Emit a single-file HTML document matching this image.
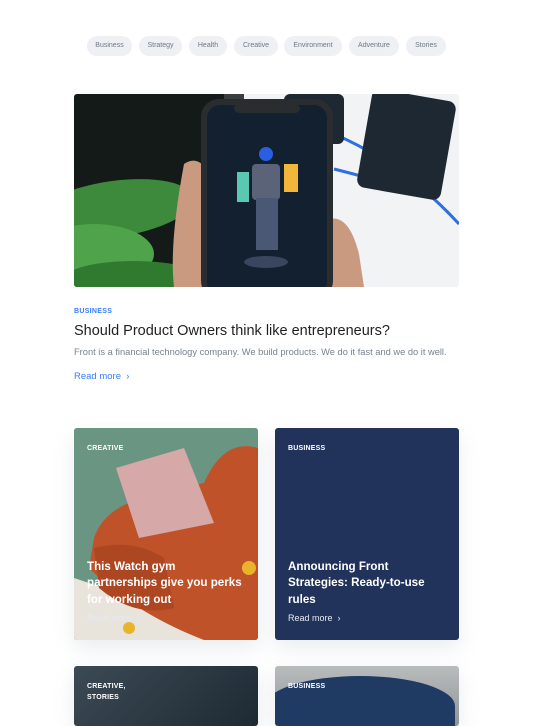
<!DOCTYPE html>
<html><head><meta charset="utf-8"><style>
*{margin:0;padding:0;box-sizing:border-box}
body{width:533px;height:711px;overflow:hidden;background:#fff;font-family:"Liberation Sans",sans-serif;position:relative}
.pill{position:absolute;top:36px;height:20px;border-radius:10px;background:#eef0f3;color:#6f7784;font-size:7px;line-height:20px;text-align:center}
.abs{position:absolute}
.card{position:absolute;width:184px;border-radius:3px;overflow:hidden;box-shadow:0 8px 20px rgba(140,152,164,.18)}
.cat{position:absolute;left:13px;top:15px;color:#fff;font-size:7px;font-weight:bold;letter-spacing:.2px;line-height:11px}
.ct{position:absolute;left:13px;top:131px;width:160px;color:#fff;font-size:11.6px;font-weight:bold;line-height:16.3px}
.rm{position:absolute;left:13px;top:185px;color:#e6e9f0;font-size:9px}
</style></head><body>
<div class="pill" style="left:87px;width:45px">Business</div>
<div class="pill" style="left:139px;width:43px">Strategy</div>
<div class="pill" style="left:189px;width:38px">Health</div>
<div class="pill" style="left:234px;width:44px">Creative</div>
<div class="pill" style="left:284px;width:58px">Environment</div>
<div class="pill" style="left:349px;width:50px">Adventure</div>
<div class="pill" style="left:406px;width:40px">Stories</div>

<svg class="abs" style="left:74px;top:94px;border-radius:3px" width="385" height="193" viewBox="0 0 385 193">
<rect width="385" height="193" fill="#f2f3f5"/>
<rect width="160" height="193" fill="#131a17"/>
<rect x="150" width="20" height="193" fill="#3a3e40"/>
<ellipse cx="40" cy="115" rx="80" ry="28" fill="#3d8a3c" transform="rotate(-8 40 115)"/>
<ellipse cx="20" cy="160" rx="60" ry="30" fill="#4fa34a"/>
<ellipse cx="60" cy="185" rx="70" ry="18" fill="#2f7a2f"/>
<path d="M260 40 Q330 70 385 130" stroke="#2f6fe0" stroke-width="3" fill="none"/>
<path d="M260 75 Q320 90 340 100" stroke="#2f6fe0" stroke-width="3" fill="none"/>
<rect x="290" y="0" width="85" height="100" rx="8" fill="#1d2833" transform="rotate(10 330 50)"/>
<rect x="210" y="0" width="60" height="50" rx="6" fill="#1d2833"/>
<path d="M110 70 Q125 60 135 80 L140 193 L100 193 Q95 150 110 70Z" fill="#c99a80"/>
<path d="M255 125 Q275 120 285 160 L290 193 L250 193Z" fill="#c99a80"/>
<rect x="127" y="5" width="132" height="200" rx="18" fill="#2a2d30"/>
<rect x="133" y="11" width="120" height="190" rx="13" fill="#132030"/>
<rect x="160" y="10" width="66" height="9" rx="5" fill="#2a2d30"/>
<circle cx="192" cy="60" r="7" fill="#2a5fe0"/>
<rect x="178" y="70" width="28" height="36" rx="4" fill="#5a6378"/>
<rect x="163" y="78" width="12" height="30" fill="#5bc9b1"/>
<rect x="210" y="70" width="14" height="28" fill="#f2b63a"/>
<rect x="182" y="104" width="22" height="52" fill="#4a5876"/>
<ellipse cx="192" cy="168" rx="22" ry="6" fill="#3a4660"/>
</svg>

<div class="abs" style="left:74px;top:308px;color:#377dff;font-size:7px;font-weight:bold;letter-spacing:.3px">BUSINESS</div>
<div class="abs" style="left:74px;top:323px;color:#1e2022;font-size:14.5px;white-space:nowrap">Should Product Owners think like entrepreneurs?</div>
<div class="abs" style="left:74px;top:347px;color:#77838f;font-size:9.3px;white-space:nowrap">Front is a financial technology company. We build products. We do it fast and we do it well.</div>
<div class="abs" style="left:74px;top:371px;color:#377dff;font-size:9.5px">Read more &nbsp;›</div>

<div class="card" style="left:74px;top:428px;height:212px;background:#6e9a86">
<svg class="abs" style="left:0;top:0" width="184" height="212">
<rect width="184" height="212" fill="#6b9583"/>
<path d="M0 150 L60 170 L140 212 L0 212Z" fill="#e8e4dc"/>
<path d="M20 110 Q30 80 70 70 L130 55 Q150 10 184 20 L184 212 L130 212 Q60 185 15 140Z" fill="#c0522a"/>
<path d="M20 120 Q60 110 90 130 L100 180 Q60 190 25 160Z" fill="#ad4722"/>
<path d="M42 40 L110 20 L140 95 L65 110Z" fill="#d6a8a8"/>
<circle cx="175" cy="140" r="7" fill="#e8b52a"/>
<circle cx="55" cy="200" r="6" fill="#e8b52a"/>
</svg>
<div class="cat">CREATIVE</div>
<div class="ct">This Watch gym<br>partnerships give you perks<br>for working out</div>
<div class="rm">Read more &nbsp;›</div>
</div>

<div class="card" style="left:275px;top:428px;height:212px;background:#21325b">
<div class="cat">BUSINESS</div>
<div class="ct">Announcing Front<br>Strategies: Ready-to-use<br>rules</div>
<div class="rm">Read more &nbsp;›</div>
</div>

<div class="card" style="left:74px;top:666px;height:60px;background:linear-gradient(135deg,#3c4a55,#1d2a33)">
<div class="cat">CREATIVE,<br>STORIES</div>
</div>
<div class="card" style="left:275px;top:666px;height:60px;background:linear-gradient(180deg,#b9bcbd,#8e9498)">
<div style="position:absolute;left:-10px;top:10px;width:190px;height:60px;border-radius:50% 50% 0 0;background:#1f3a63"></div>
<div class="cat">BUSINESS</div>
</div>
</body></html>
